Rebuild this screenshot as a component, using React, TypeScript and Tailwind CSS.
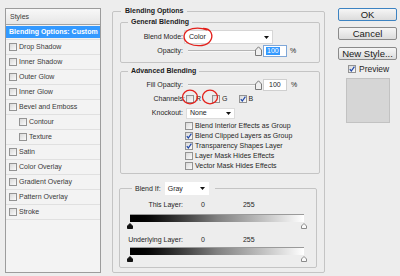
import React from "react";

function Box({ checked }: { checked?: boolean }) {
  return (
    <span className="relative inline-block w-[8px] h-[8px] shrink-0 border border-[#939393] bg-linear-to-br from-[#d9d9d9] to-[#fbfbfb]">
      {checked && (
        <svg className="absolute left-0 top-0" width="6" height="6" viewBox="0 0 6 6">
          <path d="M0.8 3.2 L2.3 5 L5.4 0.6" stroke="#1f47a8" strokeWidth="1.2" fill="none" />
        </svg>
      )}
    </span>
  );
}

function Arrow() {
  return (
    <svg width="5" height="3" viewBox="0 0 5 3" className="shrink-0">
      <path d="M0 0 H5 L2.5 3 Z" fill="#111" />
    </svg>
  );
}

function Thumb() {
  return (
    <svg width="7" height="10" viewBox="0 0 7 10" className="shrink-0">
      <path d="M0.5 9.5 V4 L3.5 0.8 L6.5 4 V9.5 Z" fill="#efefef" stroke="#7a7a7a" strokeWidth="1" />
    </svg>
  );
}

function Pointer({ dark }: { dark?: boolean }) {
  return (
    <svg width="6" height="6" viewBox="0 0 6 6" className="shrink-0">
      <path
        d="M0.5 5.5 V3 L3 0.5 L5.5 3 V5.5 Z"
        fill={dark ? "#111" : "#fafafa"}
        stroke={dark ? "#111" : "#8a8a8a"}
        strokeWidth="1"
      />
    </svg>
  );
}

function Label({ children }: { children: React.ReactNode }) {
  return <span className="w-[62px] shrink-0 text-right">{children}</span>;
}

function Slider() {
  return (
    <div className="ml-[5px] flex items-center">
      <div className="w-[67px] h-[2px] bg-[#b4b4b4] border-b border-[#f8f8f8]" />
      <Thumb />
    </div>
  );
}

const listRows: { label: string; indent?: boolean }[] = [
  { label: "Drop Shadow" },
  { label: "Inner Shadow" },
  { label: "Outer Glow" },
  { label: "Inner Glow" },
  { label: "Bevel and Emboss" },
  { label: "Contour", indent: true },
  { label: "Texture", indent: true },
  { label: "Satin" },
  { label: "Color Overlay" },
  { label: "Gradient Overlay" },
  { label: "Pattern Overlay" },
  { label: "Stroke" },
];

function LeftPanel() {
  return (
    <div className="ml-[5px] mt-[8px] w-[96px] h-[265px] shrink-0 border border-[#9c9c9c] bg-[#f3f3f3] flex flex-col text-[#3a3a3a]">
      <div className="h-[16px] shrink-0 flex items-center pl-[4px] bg-linear-to-b from-[#f8f8f8] to-[#e6e6e6] border-b border-[#a3a3a3]">
        Styles
      </div>
      <div className="h-[15px] shrink-0 py-[1px] border-b border-[#e0e0e0]">
        <div className="h-full bg-[#3399ff] text-white font-bold flex items-center pl-[3px]">
          Blending Options: Custom
        </div>
      </div>
      {listRows.map((r) => (
        <div
          key={r.label}
          className={
            "h-[15px] shrink-0 flex items-center gap-[2px] border-b border-[#e0e0e0] " +
            (r.indent ? "pl-[13px]" : "pl-[3px]")
          }
        >
          <Box />
          <span>{r.label}</span>
        </div>
      ))}
    </div>
  );
}

function Main() {
  return (
    <fieldset className="ml-[11px] mt-[6px] w-[213px] shrink-0 border border-[#c4c4c4] rounded-[2px]">
      <legend className="ml-[8px] px-[4px] font-bold text-[#1c1c1c]">Blending Options</legend>

      <fieldset className="ml-[7px] mr-[4px] mt-[1px] border border-[#c4c4c4] rounded-[2px]">
        <legend className="ml-[7px] px-[3px] font-bold text-[#1c1c1c]">General Blending</legend>
        <div className="mt-[3px] h-[14px] flex items-center">
          <Label>Blend Mode:</Label>
          <div className="ml-[1px] w-[89px] h-[14px] bg-white border border-[#d6d6d6] flex items-center justify-between pl-[4px] pr-[3px] text-[#222]">
            <span>Color</span>
            <Arrow />
          </div>
        </div>
        <div className="h-[14px] flex items-center">
          <Label>Opacity:</Label>
          <Slider />
          <div className="ml-[1px] w-[24px] h-[12px] bg-white border border-[#7fa7d8] flex items-center pl-[2px]">
            <span className="bg-[#3399ff] text-white px-[1px] leading-[8px]">100</span>
          </div>
          <span className="ml-[3px]">%</span>
        </div>
        <div className="h-[4px]" />
      </fieldset>

      <fieldset className="ml-[7px] mr-[4px] mt-[3px] border border-[#c4c4c4] rounded-[2px]">
        <legend className="ml-[7px] px-[3px] font-bold text-[#1c1c1c]">Advanced Blending</legend>
        <div className="mt-[2px] h-[14px] flex items-center">
          <Label>Fill Opacity:</Label>
          <Slider />
          <div className="ml-[1px] w-[24px] h-[12px] bg-white border border-[#cfcfcf] flex items-center pl-[5px]">
            100
          </div>
          <span className="ml-[4px]">%</span>
        </div>
        <div className="h-[13px] flex items-center">
          <span className="w-[64px] shrink-0 text-right">Channels:</span>
          <span className="ml-[1px] flex items-center gap-[2px]">
            <Box />
            <span>R</span>
          </span>
          <span className="ml-[11px] flex items-center gap-[2px]">
            <Box />
            <span>G</span>
          </span>
          <span className="ml-[11px] flex items-center gap-[2px]">
            <Box checked />
            <span>B</span>
          </span>
        </div>
        <div className="h-[16px] flex items-center">
          <Label>Knockout:</Label>
          <div className="ml-[3px] w-[49px] h-[11px] bg-white border border-[#dcdcdc] flex items-center justify-between pl-[3px] pr-[3px]">
            <span>None</span>
            <Arrow />
          </div>
        </div>
        {[
          ["Blend Interior Effects as Group", false],
          ["Blend Clipped Layers as Group", true],
          ["Transparency Shapes Layer", true],
          ["Layer Mask Hides Effects", false],
          ["Vector Mask Hides Effects", false],
        ].map(([t, c]) => (
          <div key={t as string} className="h-[10px] pl-[64px] flex items-center gap-[2px]">
            <Box checked={c as boolean} />
            <span>{t as string}</span>
          </div>
        ))}
        <div className="h-[2px]" />
      </fieldset>

      <fieldset className="ml-[6px] mr-[7px] mt-[8px] mb-[4px] border border-[#c4c4c4] rounded-[2px]">
        <legend className="ml-[12px] pl-[3px] pr-[6px] flex items-center">
          <span>Blend If:</span>
          <div className="ml-[4px] w-[44px] h-[13px] bg-white flex items-center justify-between pl-[3px] pr-[4px]">
            <span>Gray</span>
            <Arrow />
          </div>
        </legend>
        <div className="mt-[5px] h-[10px] flex items-center">
          <span className="w-[63px] shrink-0 text-right">This Layer:</span>
          <span className="ml-[18px]">0</span>
          <span className="ml-[38px]">255</span>
        </div>
        <div className="mt-[4px] ml-[10px] w-[174px] h-[8px] bg-linear-to-r from-black via-[#808080] to-white border-t border-[#9a9a9a]" />
        <div className="ml-[7px] w-[180px] h-[7px] flex items-end justify-between">
          <Pointer dark />
          <Pointer />
        </div>
        <div className="mt-[6px] h-[10px] flex items-center">
          <span className="w-[63px] shrink-0 text-right">Underlying Layer:</span>
          <span className="ml-[18px]">0</span>
          <span className="ml-[38px]">255</span>
        </div>
        <div className="mt-[2px] ml-[10px] w-[174px] h-[8px] bg-linear-to-r from-black via-[#808080] to-white border-t border-[#9a9a9a]" />
        <div className="ml-[7px] w-[180px] h-[7px] flex items-end justify-between">
          <Pointer dark />
          <Pointer />
        </div>
        <div className="h-[5px]" />
      </fieldset>
    </fieldset>
  );
}

function Right() {
  const btn =
    "w-[59px] h-[13px] rounded-[2px] flex items-center justify-center text-[9.5px] leading-[11px] text-[#1a1a1a] bg-linear-to-b from-[#f6f6f6] to-[#dcdcdc]";
  return (
    <div className="ml-[13px] mt-[8px] w-[59px] shrink-0 flex flex-col">
      <div className={btn + " border border-[#3c83c2] from-[#eef6fc] to-[#cfe4f5]"}>OK</div>
      <div className={btn + " mt-[6px] border border-[#8a8a8a]"}>Cancel</div>
      <div className={btn + " mt-[7px] border border-[#8a8a8a]"}>New Style...</div>
      <div className="mt-[4px] h-[10px] pl-[10px] flex items-center gap-[3px] text-[8.5px]">
        <Box checked />
        <span>Preview</span>
      </div>
      <div className="mt-[4px] ml-[8px] w-[44px] h-[45px] bg-[#d6d6d6] border border-[#c2c2c2]" />
    </div>
  );
}

function Annotations() {
  return (
    <svg
      className="absolute left-0 top-0 pointer-events-none"
      width="400"
      height="276"
      viewBox="0 0 400 276"
    >
      <path
        d="M207 30 C198 26.5 185 28 184 36 C183.5 43 193 46.5 202 45.5 C210 44.5 213.5 38 211 32.5 C209.5 29.5 206 28.5 203 28.5"
        stroke="#e3201b"
        strokeWidth="1.3"
        fill="none"
      />
      <ellipse cx="190" cy="97" rx="7.5" ry="6.8" stroke="#e3201b" strokeWidth="1.3" fill="none" />
      <ellipse cx="210" cy="97" rx="7.5" ry="6.8" stroke="#e3201b" strokeWidth="1.3" fill="none" />
    </svg>
  );
}

export default function App() {
  return (
    <div className="relative w-[400px] h-[276px] overflow-hidden bg-[#ededed] text-[7px] leading-[10px] text-[#262626] [font-family:'Liberation_Sans',Arial,sans-serif] flex items-start">
      <LeftPanel />
      <Main />
      <Right />
      <Annotations />
    </div>
  );
}
